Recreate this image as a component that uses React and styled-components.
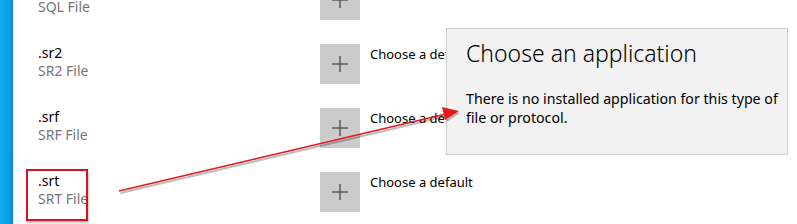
import styled, { createGlobalStyle } from "styled-components";

const GlobalStyle = createGlobalStyle`
  html, body {
    margin: 0;
    padding: 0;
    background: #ffffff;
    overflow: hidden;
  }
  body {
    font-family: "Noto Sans", "Open Sans", "Liberation Sans", sans-serif;
    color: #000;
  }
`;

const Page = styled.div`
  position: relative;
  display: flex;
  width: 797px;
  height: 224px;
  overflow: hidden;
`;

const SideStrip = styled.div`
  width: 13px;
  flex-shrink: 0;
  background: linear-gradient(to right, #17a9ee, #0a9be2 80%, #0784c8);
`;

const List = styled.div`
  display: flex;
  flex-direction: column;
  gap: 24px;
  margin-top: -20px;
  padding-left: 25px;
`;

const Row = styled.div`
  display: flex;
  align-items: flex-start;
  height: 40px;
`;

const NameCell = styled.div`
  position: relative;
  width: 282px;
  flex-shrink: 0;

  ${(p) =>
    p.$highlight &&
    `
    &::after {
      content: "";
      position: absolute;
      left: -12px;
      top: -3px;
      width: 58px;
      height: 48px;
      border: 2px solid #d4141c;
      box-shadow: 1px 2px 2px rgba(0, 0, 0, 0.25);
    }
  `}
`;

const Ext = styled.div`
  font-size: 14px;
  line-height: 18px;
  color: #000;
`;

const Desc = styled.div`
  font-size: 14px;
  line-height: 18px;
  color: #767676;
`;

const AddButton = styled.div`
  width: 40px;
  height: 40px;
  flex-shrink: 0;
  background: #cccccc;
  display: flex;
  align-items: center;
  justify-content: center;
`;

const Label = styled.div`
  margin-left: 10px;
  padding-top: 2px;
  font-size: 13px;
  line-height: 17px;
  white-space: nowrap;
`;

const Flyout = styled.div`
  position: absolute;
  left: 446px;
  top: 28px;
  width: 340px;
  height: 125px;
  box-sizing: content-box;
  background: #f2f2f2;
  border: 1px solid #cfcfcf;
`;

const FlyoutBody = styled.div`
  padding: 8px 4px 0 19px;
`;

const FlyoutTitle = styled.div`
  font-size: 23px;
  font-weight: 300;
  line-height: 32px;
  color: #000;
`;

const FlyoutText = styled.div`
  margin-top: 20px;
  font-size: 14.2px;
  line-height: 19px;
  color: #000;
`;

const Annotation = styled.svg`
  position: absolute;
  left: 0;
  top: 0;
  pointer-events: none;
`;

const Plus = () => (
  <svg width="18" height="18" viewBox="0 0 18 18">
    <path d="M9 1v16M1 9h16" stroke="#5a5a5a" strokeWidth="1.5" fill="none" />
  </svg>
);

const rows = [
  { ext: ".sql", desc: "SQL File", label: "" },
  { ext: ".sr2", desc: "SR2 File", label: "Choose a default" },
  { ext: ".srf", desc: "SRF File", label: "Choose a default" },
  { ext: ".srt", desc: "SRT File", label: "Choose a default", highlight: true },
];

const App = () => {
  return (
    <>
      <GlobalStyle />
      <Page>
        <SideStrip />
        <List>
          {rows.map((r) => (
            <Row key={r.ext}>
              <NameCell $highlight={r.highlight}>
                <Ext>{r.ext}</Ext>
                <Desc>{r.desc}</Desc>
              </NameCell>
              <AddButton>
                <Plus />
              </AddButton>
              {r.label && <Label>{r.label}</Label>}
            </Row>
          ))}
        </List>

        <Flyout>
          <FlyoutBody>
            <FlyoutTitle>Choose an application</FlyoutTitle>
            <FlyoutText>
              There is no installed application for this type of file or
              protocol.
            </FlyoutText>
          </FlyoutBody>
        </Flyout>

        <Annotation width="797" height="224" viewBox="0 0 797 224">
          <g opacity="0.25" transform="translate(1.5 2)">
            <line x1="119" y1="191" x2="446" y2="114" stroke="#000" strokeWidth="2" />
            <polygon points="459,111 442,107 445,120" fill="#000" />
          </g>
          <line x1="119" y1="191" x2="446" y2="114" stroke="#e31b1b" strokeWidth="1.6" />
          <polygon points="459,111 442,107 445,120" fill="#e31b1b" />
        </Annotation>
      </Page>
    </>
  );
};

export default App;
